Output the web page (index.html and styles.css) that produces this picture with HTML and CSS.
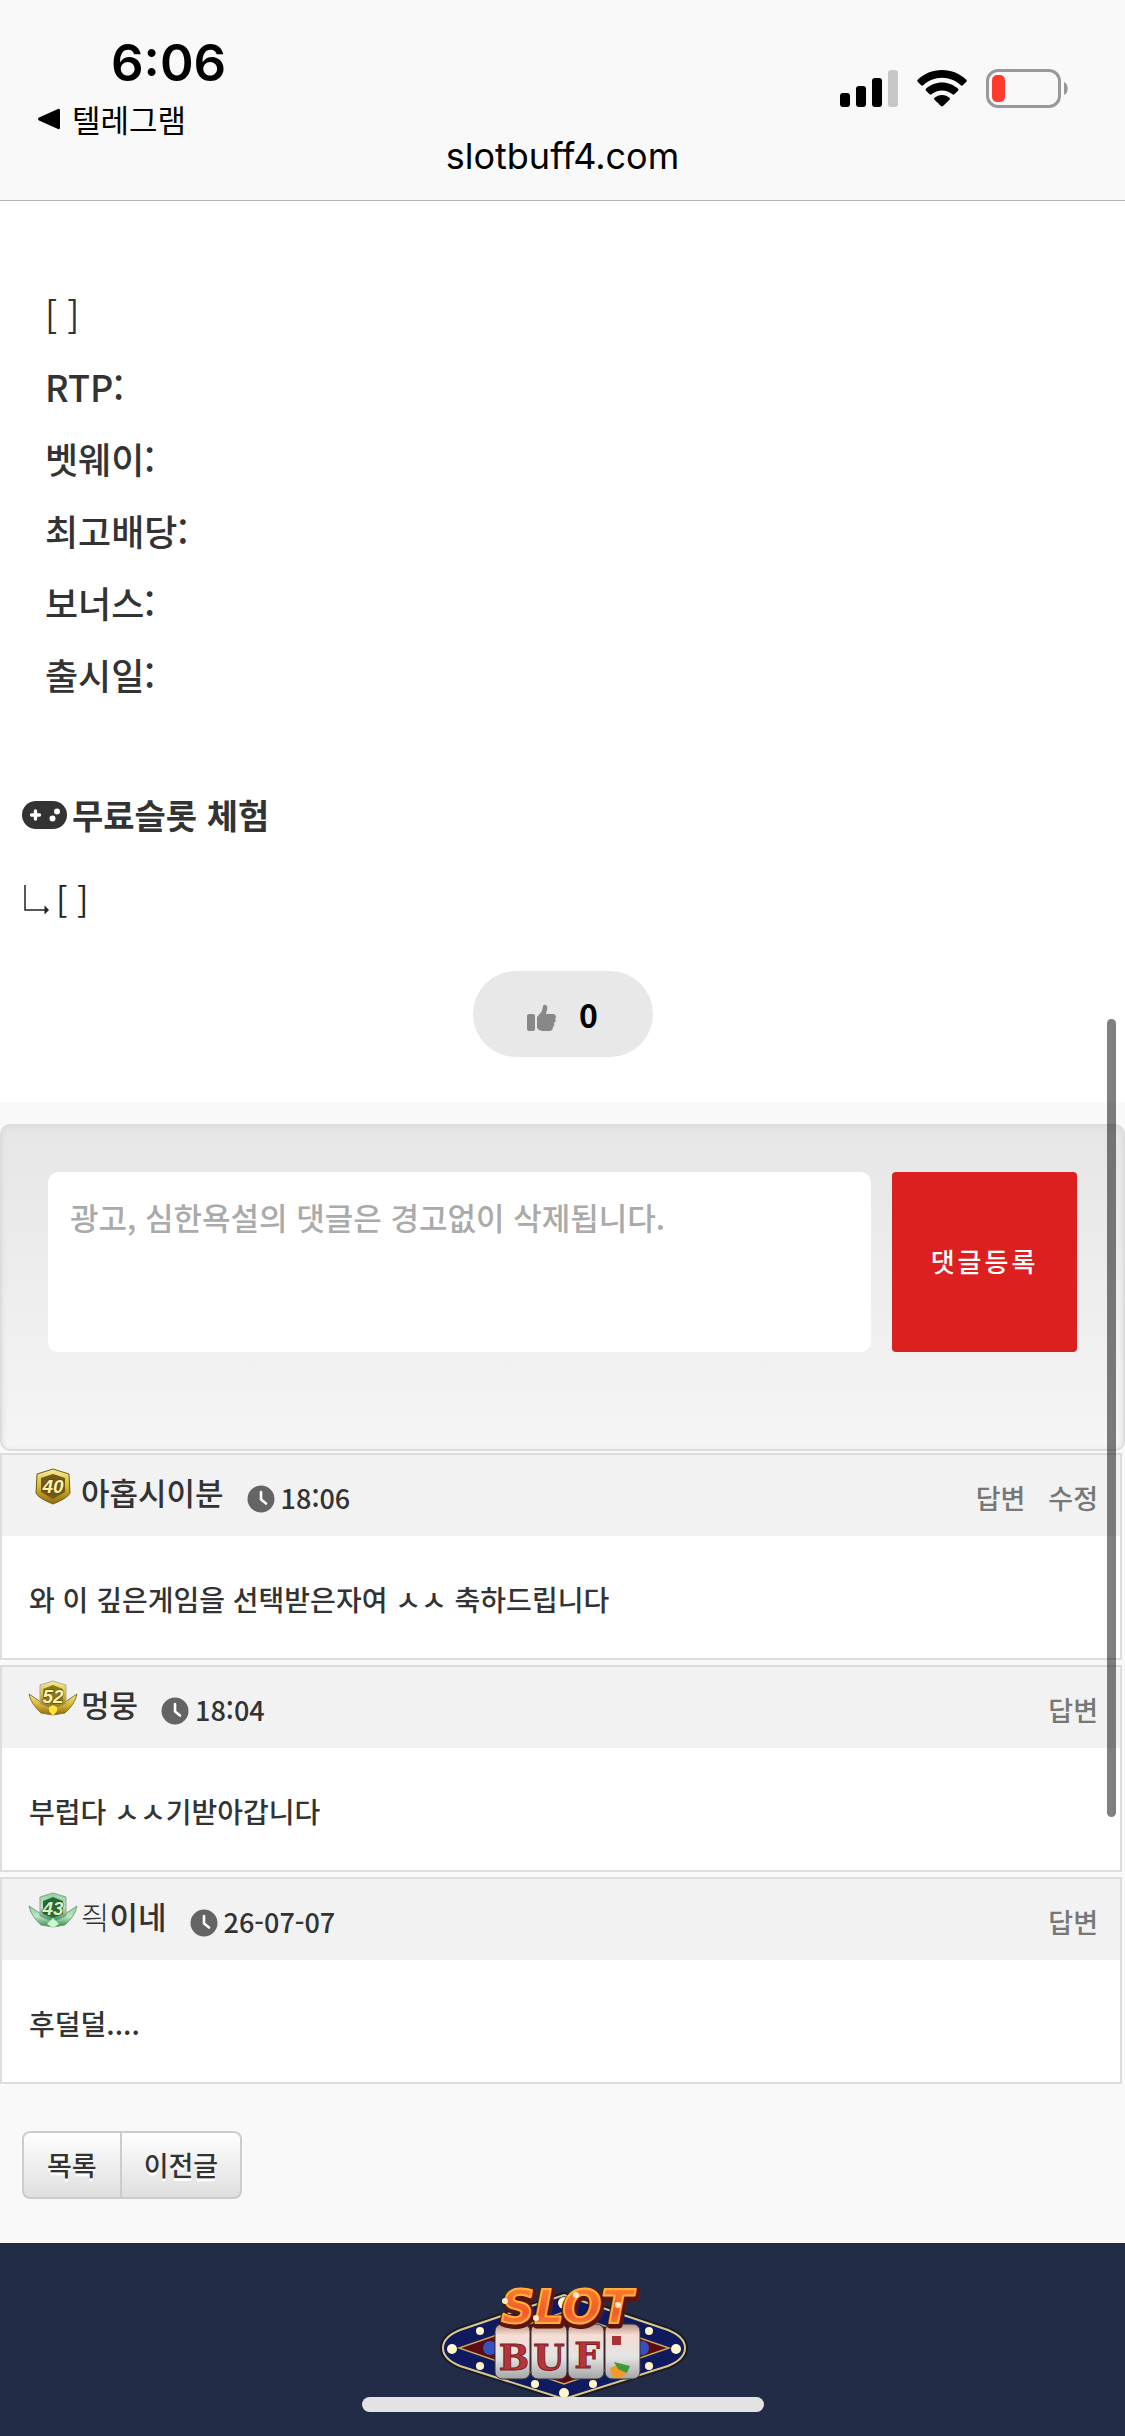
FILE: index.html
```html
<!DOCTYPE html>
<html lang="ko">
<head>
<meta charset="utf-8">
<meta name="viewport" content="width=device-width, initial-scale=1">
<title>slotbuff4.com</title>
<link rel="stylesheet" href="styles.css">
</head>
<body>
<header class="status">
  <div class="status-row">
    <div class="status-left">
      <div class="clock">6:06</div>
      <a class="back" href="#">
        <svg class="back-icon" viewBox="0 0 22 22" aria-hidden="true"><path d="M20 1Q22 0 22 3V19Q22 22 20 21L1 12.500Q-1 11 1 9.500Z"/></svg>
        텔레그램
      </a>
    </div>
    <div class="status-icons">
      <svg width="58" height="38" viewBox="0 0 58 38" aria-hidden="true">
        <rect x="0" y="24" width="10" height="14" rx="3"/><rect x="16" y="17" width="10" height="21" rx="3"/><rect x="32" y="9" width="10" height="29" rx="3"/><rect x="48" y="1" width="10" height="37" rx="3" fill="#c7c7c7"/>
      </svg>
      <svg width="50" height="38" viewBox="0 0 50 38" aria-hidden="true">
        <path d="M25 1C34.500 1 43 4.700 49.300 10.700Q50.300 11.700 49.300 12.700L45.800 16.200Q44.800 17.100 43.800 16.200C38.800 11.600 32.200 8.800 25 8.800S11.200 11.600 6.200 16.200Q5.200 17.100 4.200 16.200L.7 12.700Q-.3 11.700.7 10.700C7 4.700 15.500 1 25 1Z"/>
        <path d="M25 13.500C31.200 13.500 36.800 15.900 41 19.700Q42 20.700 41 21.700L37.400 25.200Q36.400 26.100 35.400 25.200C32.600 22.800 29 21.400 25 21.400S17.400 22.800 14.600 25.200Q13.600 26.100 12.600 25.200L9 21.700Q8 20.700 9 19.700C13.200 15.900 18.800 13.500 25 13.500Z"/>
        <path d="M25 26C27.900 26 30.500 27.100 32.500 28.800Q33.500 29.800 32.500 30.800L26 37Q25 37.900 24 37L17.500 30.800Q16.500 29.800 17.500 28.800C19.500 27.100 22.100 26 25 26Z"/>
      </svg>
      <svg width="82" height="39" viewBox="0 0 82 39" aria-hidden="true">
        <rect x="1.500" y="1.500" width="72" height="36" rx="10.500" fill="none" stroke="#999" stroke-width="3"/>
        <path d="M78 13C83 15 83 24 78 26Z" fill="#999"/>
        <rect x="6" y="6" width="13" height="27" rx="5" fill="#ff3b30"/>
      </svg>
    </div>
  </div>
  <div class="address">slotbuff4.com</div>
</header>

<main>
  <article class="post">
    <ul class="facts">
      <li>[ ]</li>
      <li>RTP:</li>
      <li>벳웨이:</li>
      <li>최고배당:</li>
      <li>보너스:</li>
      <li>출시일:</li>
    </ul>
    <h2 class="trial">
      <svg width="45" height="28" viewBox="0 0 45 28" aria-hidden="true">
        <rect width="45" height="28" rx="14" fill="#333"/>
        <path d="M13.500 10V18M9.500 14H17.500" stroke="#fff" stroke-width="3.400" stroke-linecap="round"/>
        <circle cx="35" cy="10.500" r="3" fill="#fff"/><circle cx="30.500" cy="17.500" r="3" fill="#fff"/>
      </svg>
      무료슬롯 체험
    </h2>
    <p class="trial-link">
      <svg width="28" height="34" viewBox="0 0 28 34" aria-hidden="true"><path d="M3 2V27H23" fill="none" stroke="#222" stroke-width="1.500"/><path d="M22.500 22.500L27 27L22.500 31.500Z" fill="#222"/></svg>
      [ ]
    </p>
    <button class="like" type="button" aria-label="추천">
      <svg width="30" height="28" viewBox="0 0 30 28" aria-hidden="true"><rect y="10" width="8" height="17" rx="2"/><path d="M10 13L15 7L16 2Q17 0 19 1Q21 2 20 6L19 10H26Q29 10 29 13L28 15Q30 17 27 19Q28 22 26 23Q26 27 22 27H15Q12 27 10 24Z"/></svg>
      <b>0</b>
    </button>
  </article>

  <form class="write">
    <textarea class="write-text" aria-label="댓글" placeholder="광고, 심한욕설의 댓글은 경고없이 삭제됩니다."></textarea>
    <button class="write-send" type="button">댓글등록</button>
  </form>

  <section class="comments">
    <article class="comment">
      <header class="comment-head">
        <svg class="badge" viewBox="0 0 50 38" aria-hidden="true">
          <path d="M25 1L41 6L42 25Q40 30 25 36Q10 30 8 25L9 6Z" fill="url(#gold)" stroke="#6d5c1d"/>
          <path d="M25 6L37 10V24L25 31L13 24V10Z" fill="#70591a"/>
          <text x="25" y="25" class="badge-num" fill="#fff3b0">40</text>
        </svg>
        <span class="name">아홉시이분</span>
        <svg class="time-icon" viewBox="0 0 28 28" aria-hidden="true"><circle cx="14" cy="14" r="13.500" fill="#646464"/><path d="M14 7V14.500L19 18.500" fill="none" stroke="#fff" stroke-width="2.600" stroke-linecap="round"/></svg>
        <time class="time">18:06</time>
        <nav class="actions"><a href="#">답변</a><a href="#">수정</a></nav>
      </header>
      <p class="comment-text">와 이 깊은게임을 선택받은자여 ㅅㅅ 축하드립니다</p>
    </article>
    <article class="comment">
      <header class="comment-head">
        <svg class="badge" viewBox="0 0 50 38" aria-hidden="true">
          <path d="M1 14L13 22L25 25L37 22L49 14Q47 24 37 33L25 35L13 33Q3 24 1 14Z" fill="url(#gold)" stroke="#8a7434"/>
          <path d="M12 5L25 1L38 5V24L25 30L12 24Z" fill="url(#gold)" stroke="#aaa"/>
          <path d="M15 9L25 5L35 9V22L25 26L15 22Z" fill="#8b7a17"/>
          <text x="25" y="23" class="badge-num" fill="#fff3b0">52</text>
          <path d="M21 27L25 25L29 27V31L25 36L21 31Z" fill="#ffe23c"/>
        </svg>
        <span class="name">멍뭉</span>
        <svg class="time-icon" viewBox="0 0 28 28" aria-hidden="true"><circle cx="14" cy="14" r="13.500" fill="#646464"/><path d="M14 7V14.500L19 18.500" fill="none" stroke="#fff" stroke-width="2.600" stroke-linecap="round"/></svg>
        <time class="time">18:04</time>
        <nav class="actions"><a href="#">답변</a></nav>
      </header>
      <p class="comment-text">부럽다 ㅅㅅ기받아갑니다</p>
    </article>
    <article class="comment">
      <header class="comment-head">
        <svg class="badge" viewBox="0 0 50 38" aria-hidden="true">
          <path d="M1 14L13 22L25 25L37 22L49 14Q47 24 37 33L25 35L13 33Q3 24 1 14Z" fill="url(#green)" stroke="#789c80"/>
          <path d="M12 5L25 1L38 5V24L25 30L12 24Z" fill="url(#green)" stroke="#999"/>
          <path d="M15 9L25 5L35 9V22L25 26L15 22Z" fill="#236c36"/>
          <text x="25" y="23" class="badge-num" fill="#c9f5d0">43</text>
          <path d="M19 32L25 26L31 32L25 36Z" fill="#c8f8d0"/>
        </svg>
        <span class="name"><span class="thin">즥</span>이네</span>
        <svg class="time-icon" viewBox="0 0 28 28" aria-hidden="true"><circle cx="14" cy="14" r="13.500" fill="#646464"/><path d="M14 7V14.500L19 18.500" fill="none" stroke="#fff" stroke-width="2.600" stroke-linecap="round"/></svg>
        <time class="time">26-07-07</time>
        <nav class="actions"><a href="#">답변</a></nav>
      </header>
      <p class="comment-text">후덜덜....</p>
    </article>
  </section>

  <nav class="pager"><a href="#">목록</a><a href="#">이전글</a></nav>
</main>

<footer class="footer">
  <svg class="logo" viewBox="0 0 250 120" role="img" aria-label="SLOT BUFF">
    <defs>
      <linearGradient id="gold" x1="0" y1="0" x2="0" y2="1"><stop offset="0" stop-color="#f7ec9a"/><stop offset=".5" stop-color="#d9b62c"/><stop offset="1" stop-color="#8f6a10"/></linearGradient>
      <linearGradient id="green" x1="0" y1="0" x2="0" y2="1"><stop offset="0" stop-color="#8fd49c"/><stop offset=".5" stop-color="#b9e8c2"/><stop offset="1" stop-color="#2f8a48"/></linearGradient>
      <linearGradient id="reel" x1="0" y1="0" x2="0" y2="1"><stop offset="0" stop-color="#b98f83"/><stop offset=".2" stop-color="#f6ddd2"/><stop offset=".6" stop-color="#e4e4e4"/><stop offset="1" stop-color="#a5a5a5"/></linearGradient>
      <linearGradient id="fire" x1="0" y1="0" x2="0" y2="1"><stop offset="0" stop-color="#ff8a2c"/><stop offset=".6" stop-color="#f4582a"/><stop offset="1" stop-color="#ff9248"/></linearGradient>
    </defs>
    <path d="M126 14L230 49Q247 56 247 67T230 85L126 118L22 85Q5 78 5 67T22 49Z" fill="#101a5e" stroke="#1a1a24" stroke-width="6"/>
    <path d="M126 14L230 49Q247 56 247 67T230 85L126 118L22 85Q5 78 5 67T22 49Z" fill="#101a5e" stroke="#d9c88c" stroke-width="2"/>
    <path d="M126 31L231 67L126 103L21 67Z" fill="#5c0d14" stroke="#c9a95c" stroke-width="1.500"/>
    <circle cx="52" cy="67" r="7" fill="#3552c0"/><circle cx="204" cy="67" r="7" fill="#3552c0"/>
    <g fill="url(#reel)" stroke="#33333a" stroke-width="1"><rect x="57" y="43" width="35" height="55" rx="7"/><rect x="93" y="43" width="36" height="55" rx="7"/><rect x="130" y="43" width="36" height="55" rx="7"/><rect x="167" y="43" width="35" height="55" rx="7"/></g>
    <g class="logo-reel"><text x="76" y="89">B</text><text x="111" y="89">U</text><text x="149" y="87">F</text></g>
    <rect x="174" y="55" width="9" height="9" fill="#a8333a"/>
    <path d="M172 88Q180 80 189 89Q187 97 179 97Q172 95 172 88Z" fill="#f39a28"/><path d="M176 81L184 83L192 85L189 92L180 88Z" fill="#3c9a38"/>
    <g fill="#fff6cc"><circle cx="14" cy="68" r="5"/><circle cx="238" cy="68" r="5"/><circle cx="42" cy="50" r="4"/><circle cx="42" cy="85" r="4"/><circle cx="211" cy="50" r="4"/><circle cx="211" cy="85" r="4"/><circle cx="97" cy="103" r="4"/><circle cx="155" cy="103" r="4"/><circle cx="126" cy="112" r="5"/><circle cx="126" cy="22" r="6"/></g>
    <g class="logo-title"><text x="130" y="44" fill="#5d1509" stroke="#5d1509" stroke-width="7">SLOT</text><text x="129" y="42" fill="url(#fire)" stroke="#ffb03a" stroke-width="2">SLOT</text></g>
    <g fill="#ffe9cc"><circle cx="67" cy="20" r="3"/><circle cx="138" cy="14" r="3"/><circle cx="98" cy="37" r="3"/><circle cx="180" cy="24" r="3"/></g>
  </svg>
</footer>
<div class="scroll-thumb"></div>
<div class="home-bar"></div>
</body>
</html>
```
FILE: styles.css
```css
* { box-sizing: border-box; }

html, body { margin: 0; min-height: 100%; }

body {
  display: flex;
  flex-direction: column;
  min-height: 100vh;
  background: #f9f9f9;
  color: #333;
  font-family: "Noto Sans CJK KR", sans-serif;
  font-weight: 500;
}

a { color: inherit; text-decoration: none; }
button, textarea { font: inherit; border: 0; margin: 0; }
svg { display: block; flex: none; }

/* Status area */
.status {
  padding: 31px 57px 21px 38px;
  border-bottom: 1px solid #b2b2b2;
  color: #000;
}
.status-row { display: flex; justify-content: space-between; height: 102px; }
.clock {
  padding-left: 73px;
  font: 600 51px/64px Inter, sans-serif;
}
.back {
  display: flex;
  align-items: center;
  gap: 12px;
  font-size: 31px;
  font-weight: 400;
  line-height: 48px;
}
.back-icon { width: 22px; height: 22px; }
.status-icons { display: flex; align-items: flex-start; gap: 19px; padding-top: 38px; }
.address {
  margin-right: -19px;
  text-align: center;
  font: 400 36px/46px Inter, sans-serif;
}

/* Post */
.post {
  display: flex;
  flex-direction: column;
  padding: 77px 22px 45px;
  background: #fff;
}
.facts {
  margin: 0;
  padding: 0 23px;
  list-style: none;
  font-size: 36px;
  line-height: 72px;
}
.facts li:first-child { font-weight: 400; }
.trial {
  display: flex;
  align-items: center;
  gap: 5px;
  margin: 70px 0 0;
  font-size: 34px;
  line-height: 70px;
  font-weight: 700;
}
.trial-link {
  display: flex;
  align-items: center;
  gap: 6px;
  margin: 15px 0 0;
  color: #222;
  font-size: 34px;
  line-height: 70px;
  font-weight: 400;
}
.like {
  display: flex;
  align-items: center;
  justify-content: center;
  align-self: center;
  gap: 22px;
  width: 180px;
  height: 86px;
  margin-top: 36px;
  border-radius: 43px;
  background: #e8e8e8;
  color: #000;
  font-size: 32px;
  fill: #888;
}
.like svg { margin-top: 8px; }

/* Comment form */
.write {
  display: flex;
  gap: 21px;
  margin: 22px 0 2px;
  padding: 46px 46px 97px;
  border: 2px solid #ddd;
  border-radius: 10px;
  background: linear-gradient(#e6e6e6, #f5f5f5);
  box-shadow: inset 0 2px 6px #ddd;
}
.write-text {
  flex: 1;
  min-width: 0;
  height: 180px;
  padding: 22px;
  border-radius: 10px;
  background: #fff;
  font-size: 31px;
  line-height: 46px;
  resize: none;
}
.write-text::placeholder { color: #aaa; opacity: 1; }
.write-send {
  width: 185px;
  height: 180px;
  padding: 0 0 4px;
  border-radius: 4px;
  background: #dc2020;
  color: #fff;
  font-size: 26px;
  letter-spacing: 3px;
}

/* Comments */
.comments { display: flex; flex-direction: column; gap: 5px; margin-right: 3px; }
.comment { border: 2px solid #ddd; background: #fff; }
.comment-head {
  display: flex;
  align-items: flex-start;
  height: 81px;
  padding: 10px 22px 0 26px;
  background: #f2f2f2;
}
.badge { width: 50px; height: 38px; margin-top: 3px; }
.badge-num {
  font: italic 700 19px "Liberation Sans", sans-serif;
  text-anchor: middle;
  stroke: #4d4310;
  stroke-width: 1px;
  paint-order: stroke;
}
.name { margin: 0 23px 0 3px; font-size: 31px; line-height: 53px; }
.thin { font-weight: 300; }
.time-icon { width: 28px; height: 28px; margin-top: 20px; }
.time { margin-left: 6px; font-size: 27px; line-height: 66px; }
.actions {
  display: flex;
  gap: 23px;
  margin-left: auto;
  color: #777;
  font-size: 27px;
  line-height: 66px;
}
.comment-text {
  margin: 0;
  padding: 36px 27px 32px;
  font-size: 28px;
  line-height: 54px;
}

/* Pager */
.pager {
  display: flex;
  width: max-content;
  margin: 47px 0 44px 22px;
  border: 2px solid #ccc;
  border-radius: 8px;
  background: linear-gradient(#fff, #dfdfdf);
  font-size: 27px;
  line-height: 64px;
  text-shadow: 0 3px 0 #fff;
}
.pager a { padding: 0 23px; }
.pager a + a { padding: 0 22px; border-left: 2px solid #ccc; }

/* Footer */
.footer { flex: 1; padding-top: 38px; background: #222c46; }
.logo { width: 250px; height: 120px; margin: 0 auto; overflow: visible; }
.logo-title text {
  font: italic 700 46px "DejaVu Sans", sans-serif;
  text-anchor: middle;
  stroke-linejoin: round;
}
.logo-reel text {
  font: 700 36px "DejaVu Serif", serif;
  text-anchor: middle;
  fill: #b8343c;
  stroke: #7a1f25;
  stroke-width: 1px;
}

/* Overlays */
.scroll-thumb {
  position: fixed;
  top: 1019px;
  right: 9px;
  width: 9px;
  height: 798px;
  border-radius: 5px;
  background: rgba(0, 0, 0, .5);
}
.home-bar {
  position: fixed;
  bottom: 24px;
  left: 50%;
  width: 402px;
  height: 15px;
  margin-left: -201px;
  border-radius: 8px;
  background: #e3e3e3;
}
```
